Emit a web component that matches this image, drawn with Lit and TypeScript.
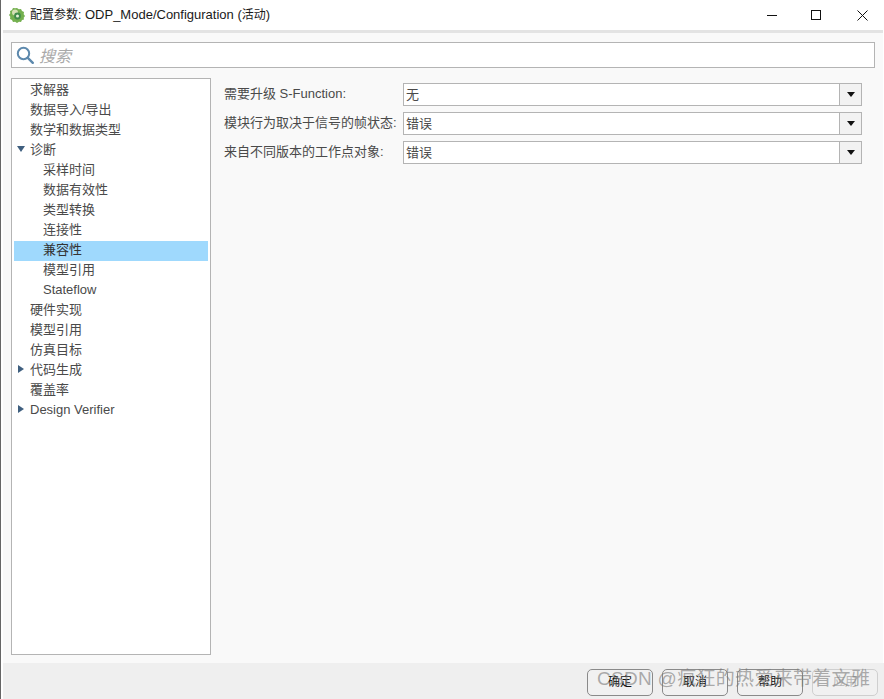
import { LitElement, html, css } from "lit";
import { customElement } from "lit/decorators.js";

type Row = { t: string; lvl: number; arrow?: "down" | "right"; sel?: boolean };

const ROWS: Row[] = [
  { t: "求解器", lvl: 1 },
  { t: "数据导入/导出", lvl: 1 },
  { t: "数学和数据类型", lvl: 1 },
  { t: "诊断", lvl: 1, arrow: "down" },
  { t: "采样时间", lvl: 2 },
  { t: "数据有效性", lvl: 2 },
  { t: "类型转换", lvl: 2 },
  { t: "连接性", lvl: 2 },
  { t: "兼容性", lvl: 2, sel: true },
  { t: "模型引用", lvl: 2 },
  { t: "Stateflow", lvl: 2 },
  { t: "硬件实现", lvl: 1 },
  { t: "模型引用", lvl: 1 },
  { t: "仿真目标", lvl: 1 },
  { t: "代码生成", lvl: 1, arrow: "right" },
  { t: "覆盖率", lvl: 1 },
  { t: "Design Verifier", lvl: 1, arrow: "right" },
];

const FIELDS = [
  ["需要升级 S-Function:", "无"],
  ["模块行为取决于信号的帧状态:", "错误"],
  ["来自不同版本的工作点对象:", "错误"],
];

@customElement("app-root")
export class AppRoot extends LitElement {
  static styles = css`
    :host {
      display: block;
      width: 884px;
      height: 699px;
      font-family: "Liberation Sans", "Noto Sans CJK SC", sans-serif;
      font-size: 13px;
      color: #4a4a4a;
      position: relative;
      overflow: hidden;
    }
    .win {
      height: 699px;
      display: flex;
      flex-direction: column;
      background: #fff;
      border-left: 1px solid #666;
      box-sizing: border-box;
    }
    .title {
      height: 30px;
      display: flex;
      align-items: center;
      padding-left: 8px;
      flex: none;
      color: #1a1a1a;
      font-size: 13px;
      line-height: 28px;
    }
    .title .cjk { font-size: 12px; }
    .logo { width: 16px; height: 16px; margin-right: 5px; flex: none; }
    .title .txt { flex: 1; height: 28px; }
    .ctrl { display: flex; align-items: center; }
    .ctrl svg { display: block; }
    .ctrl .min { margin-right: 33px; }
    .ctrl .max { margin-right: 36px; }
    .ctrl .cls { margin-right: 16px; }
    .body {
      flex: 1;
      min-height: 0;
      margin: 0 1px 0 2px;
      background: #f9f9f9;
      border-top: 3px solid #e3e3e3;
      display: flex;
      flex-direction: column;
      padding: 9px 8px 8px 8px;
      box-sizing: border-box;
    }
    .search {
      height: 26px;
      width: 864px;
      box-sizing: border-box;
      border: 1px solid #b4b4b4;
      background: #fff;
      display: flex;
      align-items: center;
      padding-left: 4px;
      flex: none;
      line-height: 24px;
    }
    .search span {
      margin: 4px 0 0 4px;
      font-style: italic;
      font-size: 16px;
      color: #a9a9a9;
    }
    .main { flex: 1; display: flex; margin-top: 10px; min-height: 0; }
    .tree {
      width: 200px;
      flex: none;
      box-sizing: border-box;
      border: 1px solid #b4b4b4;
      background: #fff;
      padding: 2px 2px;
    }
    .row {
      height: 20px;
      line-height: 18px;
      position: relative;
      white-space: nowrap;
      box-sizing: border-box;
    }
    .row.sel { background: #9fd9fd; color: #333; }
    .l1 { padding-left: 16px; }
    .l2 { padding-left: 29px; }
    .arrow { position: absolute; left: 3px; top: 4px; width: 8px; height: 8px; }
    .form {
      flex: 1;
      padding: 5px 0 0 13px;
      display: flex;
      flex-direction: column;
      gap: 6px;
    }
    .field { display: flex; height: 23px; line-height: 22px; }
    .field label { width: 179px; flex: none; white-space: nowrap; font-size: 13px; }
    .combo {
      width: 459px;
      height: 23px;
      box-sizing: border-box;
      border: 1px solid #b4b4b4;
      background: #fff;
      display: flex;
      padding-left: 2px;
    }
    .combo .v { flex: 1; }
    .combo .b {
      width: 22px;
      height: 21px;
      box-sizing: border-box;
      border-left: 1px solid #b4b4b4;
      background: #f2f2f2;
      display: flex;
      align-items: center;
      justify-content: center;
    }
    .foot {
      height: 36px;
      flex: none;
      margin-left: 2px;
      background: #efefef;
      display: flex;
      justify-content: flex-end;
      align-items: flex-start;
      gap: 9px;
      padding: 6px 6px 0 0;
      box-sizing: border-box;
    }
    .btn {
      width: 66px;
      height: 27px;
      line-height: 25px;
      text-align: center;
      box-sizing: border-box;
      border: 1px solid #8a8a8a;
      border-radius: 5px;
      background: #f1f1f1;
      font-size: 12px;
      color: #111;
    }
    .btn.off { border-color: #cfcfcf; color: #b5b5b5; }
    .wm {
      position: absolute;
      left: 597px;
      top: 665px;
      font-size: 19px;
      line-height: 28px;
      color: rgba(120, 120, 120, 0.6);
      white-space: nowrap;
      letter-spacing: 0.3px;
    }
  `;

  render() {
    return html`
      <div class="win">
        <div class="title">
          <svg class="logo" viewBox="0 0 16 16">
            <path d="M8 1l1.800 1.300 2.200-.300 1 2 2 1-.300 2.200L16 9l-1.300 1.800.3 1.700-2 .500-1 2-2-.300L8 16l-1.800-1.300-2.200.300-1-2-2-1 .300-2.200L0 8l1.300-1.800L1 4l2-1 1-2 2.200.300z" fill="#74b04f" />
            <circle cx="6" cy="5.500" r="3" fill="#d5dfb4" />
            <circle cx="8.500" cy="9" r="3.400" fill="#3f8a4a" />
            <circle cx="8.500" cy="9" r="1.500" fill="#e6f0d6" />
          </svg>
          <span class="txt"><span class="cjk">配置参数:</span> ODP_Mode/Configuration (<span class="cjk">活动</span>)</span>
          <div class="ctrl">
            <svg class="min" width="11" height="11" viewBox="0 0 11 11"><path d="M0 5.500h10" stroke="#111" stroke-width="1" /></svg>
            <svg class="max" width="10" height="10" viewBox="0 0 10 10"><rect x=".5" y=".5" width="9" height="9" fill="none" stroke="#111" /></svg>
            <svg class="cls" width="11" height="11" viewBox="0 0 11 11"><path d="M.5.5l10 10M10.500.5l-10 10" stroke="#111" stroke-width="1" fill="none" /></svg>
          </div>
        </div>
        <div class="body">
          <div class="search">
            <svg width="19" height="19" viewBox="0 0 19 19">
              <circle cx="7.500" cy="7.500" r="5.700" fill="none" stroke="#5d89ad" stroke-width="2" />
              <path d="M11.800 11.800l5 5" stroke="#5d89ad" stroke-width="2.400" stroke-linecap="round" />
            </svg>
            <span>搜索</span>
          </div>
          <div class="main">
            <div class="tree">
              ${ROWS.map(
                (r) => html`<div class="row l${r.lvl} ${r.sel ? "sel" : ""}">
                  ${r.arrow === "down"
                    ? html`<svg class="arrow" viewBox="0 0 8 8"><path d="M0 1h8L4 7z" fill="#3f5f7f" /></svg>`
                    : r.arrow === "right"
                    ? html`<svg class="arrow" viewBox="0 0 8 8"><path d="M1 0v8l6-4z" fill="#3f5f7f" /></svg>`
                    : ""}
                  ${r.t}
                </div>`
              )}
            </div>
            <div class="form">
              ${FIELDS.map(
                ([l, v]) => html`<div class="field">
                  <label>${l}</label>
                  <div class="combo">
                    <span class="v">${v}</span>
                    <span class="b"><svg width="8" height="5" viewBox="0 0 8 5"><path d="M0 0h8L4 5z" fill="#111" /></svg></span>
                  </div>
                </div>`
              )}
            </div>
          </div>
        </div>
        <div class="foot">
          <div class="btn">确定</div>
          <div class="btn">取消</div>
          <div class="btn">帮助</div>
          <div class="btn off">应用</div>
        </div>
      </div>
      <div class="wm">CSDN @疯狂的热爱来带着文雅</div>
    `;
  }
}
